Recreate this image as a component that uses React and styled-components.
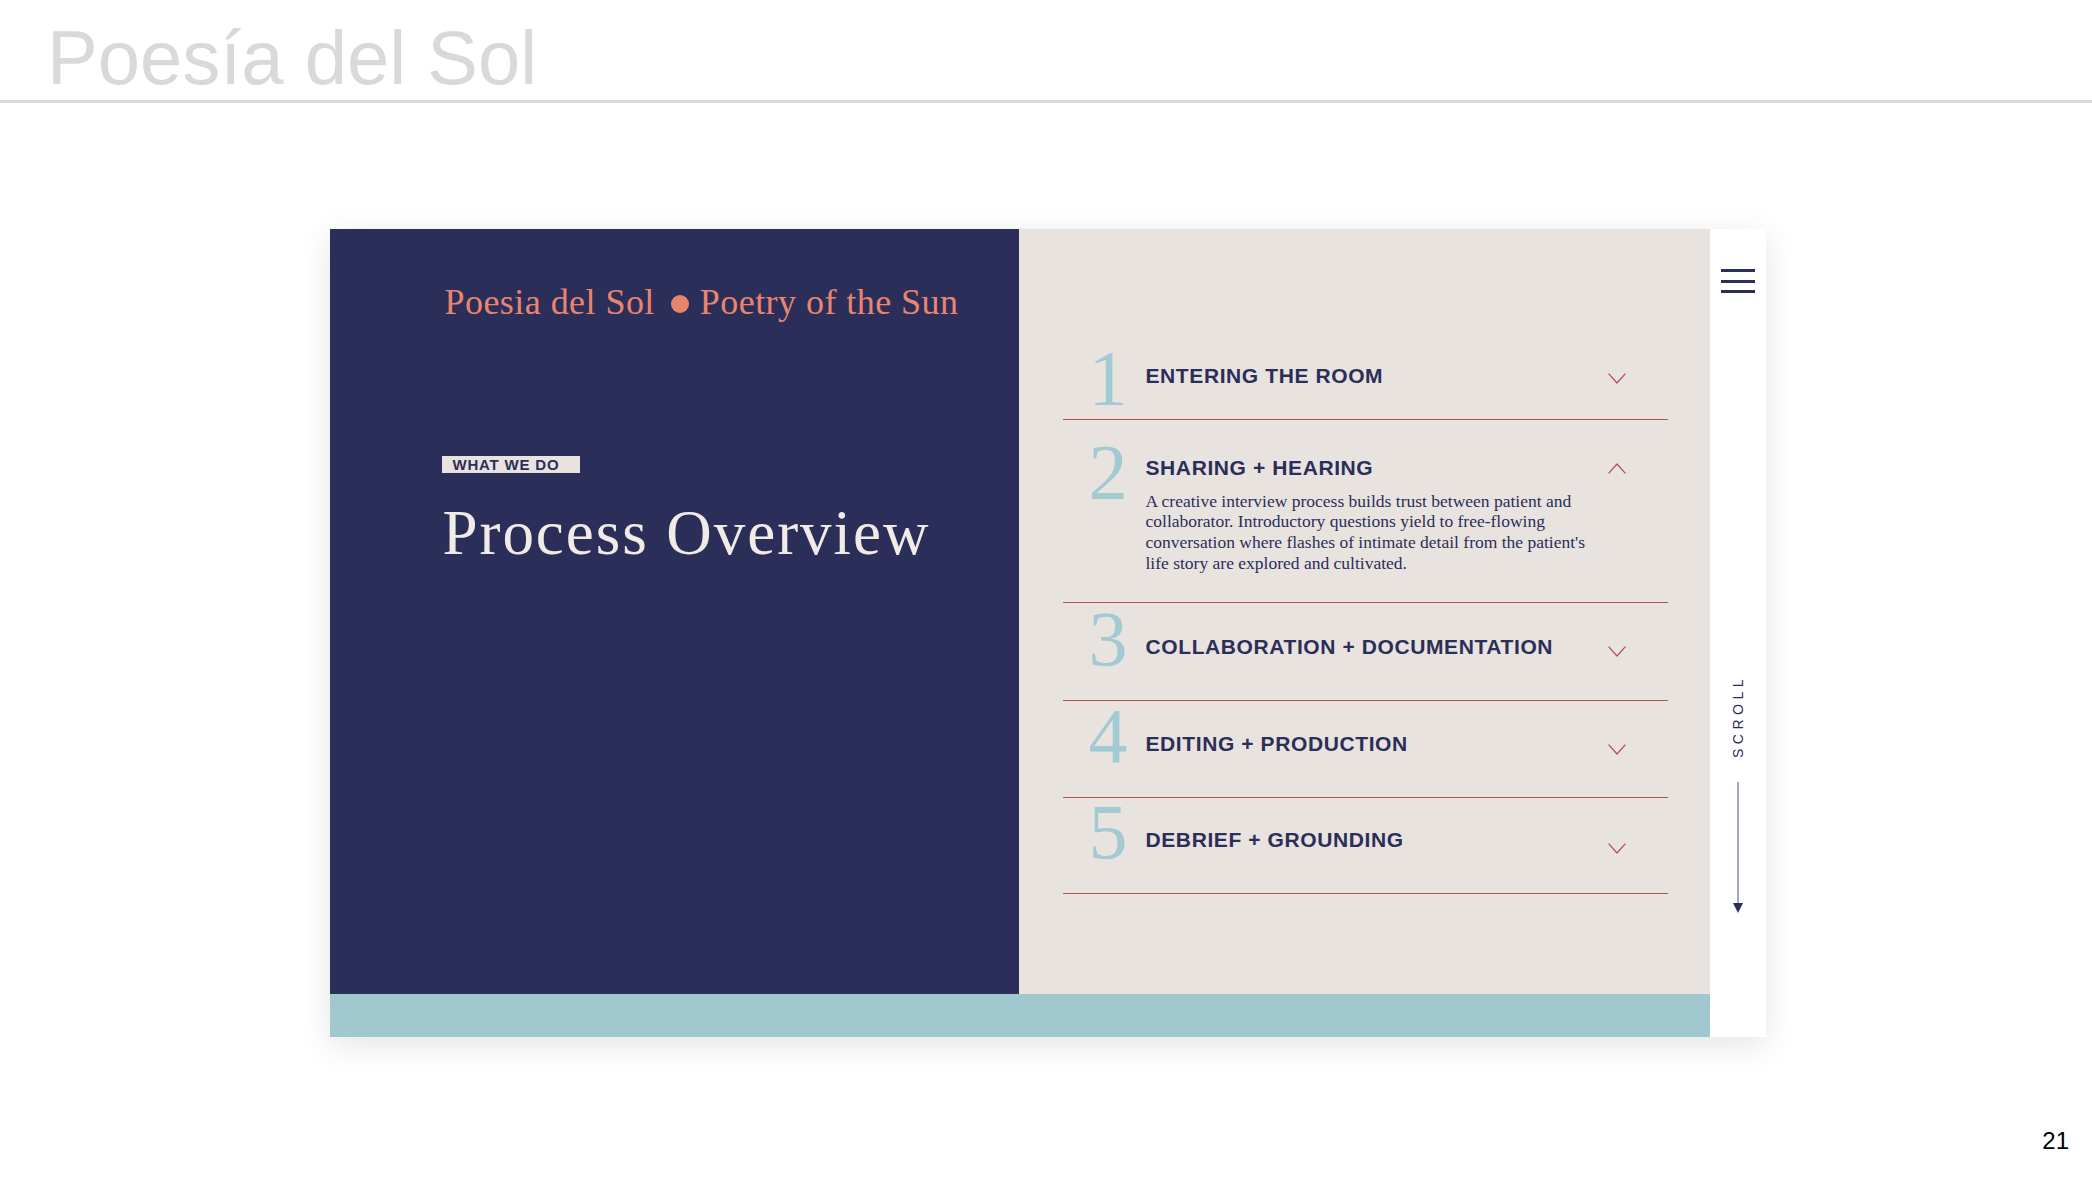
import React from 'react'
import styled, { createGlobalStyle } from 'styled-components'

const GlobalStyle = createGlobalStyle`
  html, body {
    margin: 0;
    padding: 0;
    background: #ffffff;
  }
  body {
    font-family: "Liberation Sans", Arial, sans-serif;
  }
`

const NAVY = '#2b2e58'
const BEIGE = '#e8e3df'
const TEAL = '#a1c8cf'
const RED = '#b3524c'
const SALMON = '#e9856f'

const steps = [
  { n: '1', title: 'ENTERING THE ROOM', pt: 0, pb: 2.5, numTop: 0, titleTop: 25.3, chevTop: 34.5 },
  {
    n: '2',
    title: 'SHARING + HEARING',
    open: true,
    pt: 12.5,
    pb: 28.5,
    numTop: 0,
    titleTop: 23.5,
    chevTop: 30.5,
    text: "A creative interview process builds trust between patient and collaborator. Introductory questions yield to free-flowing conversation where flashes of intimate detail from the patient's life story are explored and cultivated.",
  },
  { n: '3', title: 'COLLABORATION + DOCUMENTATION', pt: 0, pb: 22, numTop: -3, titleTop: 31.5, chevTop: 43 },
  { n: '4', title: 'EDITING + PRODUCTION', pt: 0, pb: 22, numTop: -4, titleTop: 31, chevTop: 43 },
  { n: '5', title: 'DEBRIEF + GROUNDING', pt: 0, pb: 22, numTop: -5, titleTop: 29.5, chevTop: 45 },
]

const Chevron = ({ up }) => (
  <svg width="18" height="11" viewBox="0 0 18 11" fill="none">
    <polyline
      points={up ? '0.6,10.4 9,1 17.4,10.4' : '0.6,0.6 9,10 17.4,0.6'}
      stroke={RED}
      strokeWidth="1.3"
    />
  </svg>
)

const App = () => {
  return (
    <Page>
      <GlobalStyle />
      <Header>
        <PageTitle>Poesía del Sol</PageTitle>
      </Header>

      <Stage>
        <Card>
          <IntroPanel>
            <Tagline>
              Poesia del Sol<Dot />Poetry of the Sun
            </Tagline>
            <Label>WHAT WE DO</Label>
            <Heading>Process Overview</Heading>
          </IntroPanel>

          <StepsPanel>
            {steps.map((s) => (
              <StepRow key={s.n} pt={s.pt} pb={s.pb}>
                <StepNumber top={s.numTop}>{s.n}</StepNumber>
                <StepBody top={s.titleTop}>
                  <StepTitle>{s.title}</StepTitle>
                  {s.text && <StepText>{s.text}</StepText>}
                </StepBody>
                <ChevronBox top={s.chevTop}>
                  <Chevron up={s.open} />
                </ChevronBox>
              </StepRow>
            ))}
          </StepsPanel>

          <SideBar>
            <Burger>
              <span />
              <span />
              <span />
            </Burger>
            <ScrollText>SCROLL</ScrollText>
            <svg width="10" height="131" viewBox="0 0 10 131">
              <line x1="5" y1="0" x2="5" y2="124" stroke="#50537a" strokeWidth="1" />
              <polygon points="0,121 10,121 5,131" fill={NAVY} />
            </svg>
          </SideBar>

          <BottomBar />
        </Card>
      </Stage>

      <Footer>21</Footer>
    </Page>
  )
}

const Page = styled.div`
  height: 100vh;
  display: flex;
  flex-direction: column;
`

const Header = styled.header`
  height: 103px;
  box-sizing: border-box;
  padding: 20px 0 0 47px;
  border-bottom: 3px solid #d9d9d9;
`

const PageTitle = styled.h1`
  margin: 0;
  font-family: "Liberation Sans", Arial, sans-serif;
  font-weight: 400;
  font-size: 76px;
  line-height: 1;
  color: #d9d9d9;
`

const Stage = styled.main`
  flex: 1;
  display: flex;
  justify-content: center;
  align-items: flex-start;
  padding: 126px 0 0 3px;
`

const Card = styled.section`
  display: grid;
  grid-template-columns: 689px 691px 56px;
  grid-template-rows: 765px 43px;
  box-shadow: 0 8px 30px rgba(0, 0, 0, 0.11);
`

const IntroPanel = styled.div`
  grid-column: 1;
  grid-row: 1;
  background: ${NAVY};
  padding: 53px 0 0 112px;
  display: flex;
  flex-direction: column;
  align-items: flex-start;
`

const Tagline = styled.p`
  margin: 0 0 0 3px;
  font-family: "Liberation Serif", "Times New Roman", serif;
  font-size: 36px;
  line-height: 40px;
  letter-spacing: 0.45px;
  color: ${SALMON};
  white-space: nowrap;
`

const Dot = styled.span`
  display: inline-block;
  width: 18px;
  height: 18px;
  border-radius: 50%;
  background: ${SALMON};
  margin: 0 11px 1px 16px;
  vertical-align: baseline;
`

const Label = styled.span`
  margin-top: 134px;
  width: 138px;
  height: 17px;
  box-sizing: border-box;
  padding-left: 11px;
  background: ${BEIGE};
  color: ${NAVY};
  font-family: "Liberation Sans", Arial, sans-serif;
  font-weight: 700;
  font-size: 15px;
  line-height: 17px;
  letter-spacing: 0.8px;
`

const Heading = styled.h2`
  margin: 26px 0 0 1px;
  font-family: "Liberation Serif", "Times New Roman", serif;
  font-weight: 400;
  font-size: 63px;
  line-height: 69px;
  letter-spacing: 1.95px;
  color: #f0ebe6;
  white-space: nowrap;
`

const StepsPanel = styled.div`
  grid-column: 2;
  grid-row: 1;
  background: ${BEIGE};
  padding: 109.5px 42px 0 44px;
`

const StepRow = styled.div`
  display: grid;
  grid-template-columns: 83px 1fr 18px;
  align-items: start;
  padding: ${(p) => p.pt}px 42px ${(p) => p.pb}px 0;
  border-bottom: 1px solid ${RED};
`

const StepNumber = styled.div`
  margin-top: ${(p) => p.top}px;
  padding-left: 26px;
  font-family: "Liberation Serif", "Times New Roman", serif;
  font-size: 78px;
  line-height: 78px;
  color: #a2cad2;
`

const StepBody = styled.div`
  padding-top: ${(p) => p.top}px;
`

const StepTitle = styled.h3`
  margin: 0;
  font-family: "Liberation Sans", Arial, sans-serif;
  font-weight: 700;
  font-size: 21px;
  line-height: 24px;
  letter-spacing: 0.6px;
  color: ${NAVY};
  white-space: nowrap;
`

const StepText = styled.p`
  margin: 10.75px 0 0;
  max-width: 450px;
  font-family: "Liberation Serif", "Times New Roman", serif;
  font-size: 17.5px;
  line-height: 20.7px;
  color: ${NAVY};
`

const ChevronBox = styled.div`
  margin-top: ${(p) => p.top}px;
  height: 11px;
  display: flex;
`

const SideBar = styled.aside`
  grid-column: 3;
  grid-row: 1 / span 2;
  background: #ffffff;
  display: flex;
  flex-direction: column;
  align-items: center;
  padding-top: 40px;
`

const Burger = styled.div`
  width: 34px;
  display: flex;
  flex-direction: column;
  gap: 7.5px;

  span {
    display: block;
    height: 3px;
    background: ${NAVY};
  }
`

const ScrollText = styled.span`
  margin: 382px 0 24px;
  writing-mode: vertical-rl;
  transform: rotate(180deg);
  font-family: "Liberation Sans", Arial, sans-serif;
  font-size: 14px;
  line-height: 14px;
  letter-spacing: 4.5px;
  color: ${NAVY};
`

const BottomBar = styled.div`
  grid-column: 1 / span 2;
  grid-row: 2;
  background: ${TEAL};
`

const Footer = styled.footer`
  text-align: right;
  padding: 0 23px 24.5px 0;
  font-family: "Liberation Sans", Arial, sans-serif;
  font-size: 24px;
  line-height: 27px;
  color: #000000;
`

export default App
